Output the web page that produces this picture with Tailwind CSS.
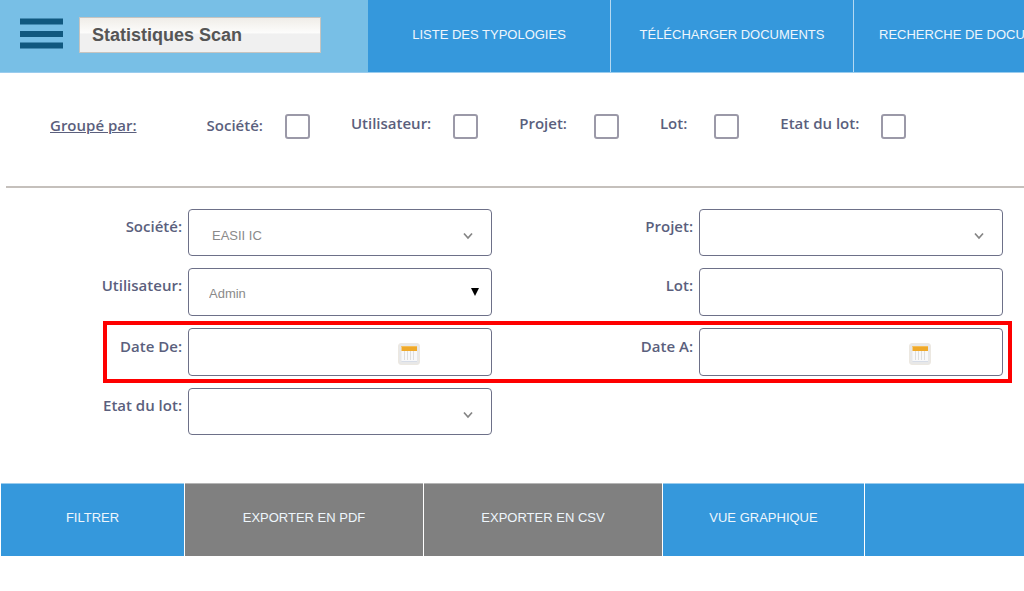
<!DOCTYPE html>
<html lang="fr">
<head>
<meta charset="utf-8">
<meta name="viewport" content="width=device-width, initial-scale=1">
<title>Statistiques Scan</title>
<script src="https://cdn.jsdelivr.net/npm/@tailwindcss/browser@4"></script>
</head>
<body class="min-h-screen overflow-x-hidden bg-white font-['Open_Sans',sans-serif] text-[15px] leading-5 font-semibold text-[#5b5f7d]">
<svg class="hidden" aria-hidden="true">
  <symbol id="chevron" viewBox="0 0 10 8"><path d="M1 1.500 5 6 9 1.500" fill="none" stroke="#858585" stroke-width="1.7"/></symbol>
  <symbol id="calendar" viewBox="0 0 22 22">
    <rect x=".5" y=".5" width="21" height="21" rx="2.5" fill="#e8e8e8" stroke="#ece8e1"/>
    <rect x="3.500" y="3.500" width="15.500" height="14.500" fill="#f8f8f9"/>
    <path d="M3.500 18H19v1H3.500z" fill="#d6dce7"/>
    <path d="M6.500 8v9M9.500 8v9M12.500 8v9M15.500 8v9" stroke="#dedede"/>
    <rect x="3.500" y="3" width="15.500" height="5" fill="#efa92a"/>
    <path d="M3.500 3.500H19" stroke="#f5bd57"/>
  </symbol>
</svg>

<header class="flex h-[73px] overflow-hidden border-b border-[#9accee] bg-[#3598dc] font-['Liberation_Sans',Arial,sans-serif]">
  <div class="flex w-[368px] shrink-0 items-start gap-4 bg-[#78bfe6] pl-5">
    <button type="button" aria-label="Menu" class="mt-[18px] text-[#10587f]">
      <svg class="h-[31px] w-[43px]" viewBox="0 0 43 31" fill="currentColor"><path d="M0 .5h43v6H0zM0 13h43v6H0zM0 24.500h43v6H0z"/></svg>
    </button>
    <input type="text" aria-label="Titre" value="Statistiques Scan" readonly class="mt-[17px] h-9 w-[242px] border border-[#c6c4c0] bg-linear-to-b from-[#f0ede8] from-0% via-[#fdfdfc] via-45% to-[#f0f0f0] to-46% px-3 text-lg font-bold text-[#555] outline-none">
  </div>
  <nav class="flex min-w-0 flex-1 text-[13px] font-normal text-[#eef6fc]">
    <a href="#" class="flex w-[243px] shrink-0 items-center justify-center border-r border-[#b5d9f2] pb-0.5">LISTE DES TYPOLOGIES</a>
    <a href="#" class="flex w-[243px] shrink-0 items-center justify-center border-r border-[#b5d9f2] pb-0.5">TÉLÉCHARGER DOCUMENTS</a>
    <a href="#" class="flex shrink-0 items-center px-[25px] pb-0.5 whitespace-nowrap">RECHERCHE DE DOCUMENTS</a>
  </nav>
</header>

<main>
  <fieldset class="ml-1.5 flex h-[115px] items-center border-b-2 border-[#c5c0bc] pb-1.5 pl-11">
    <span class="mr-[70px] pb-1 underline">Groupé par:</span>
    <div class="flex items-center gap-[41px]">
      <label class="flex items-center gap-[22px]"><span class="pb-1">Société:</span><input type="checkbox" class="size-[25px] appearance-none rounded-[3px] border-2 border-[#9b99a8] bg-white checked:bg-[#3598dc]"></label>
      <label class="flex items-center gap-[22px]"><span class="pb-2">Utilisateur:</span><input type="checkbox" class="size-[25px] appearance-none rounded-[3px] border-2 border-[#9b99a8] bg-white checked:bg-[#3598dc]"></label>
      <label class="flex items-center gap-[27px]"><span class="pb-2">Projet:</span><input type="checkbox" class="size-[25px] appearance-none rounded-[3px] border-2 border-[#9b99a8] bg-white checked:bg-[#3598dc]"></label>
      <label class="flex items-center gap-[27px]"><span class="pb-2">Lot:</span><input type="checkbox" class="size-[25px] appearance-none rounded-[3px] border-2 border-[#9b99a8] bg-white checked:bg-[#3598dc]"></label>
      <label class="flex items-center gap-[22px]"><span class="pb-2">Etat du lot:</span><input type="checkbox" class="size-[25px] appearance-none rounded-[3px] border-2 border-[#9b99a8] bg-white checked:bg-[#3598dc]"></label>
    </div>
  </fieldset>

  <form class="flex flex-col gap-3 pt-[21px] pr-0.5 pb-12">
    <div class="grid grid-cols-2">
      <div class="flex gap-1.5 pr-[19px]">
        <label for="societe" class="w-[182px] shrink-0 pt-[7px] text-right">Société:</label>
        <div class="relative flex-1">
          <select id="societe" class="block h-[47px] w-full appearance-none rounded-[4px] border border-[#6d7088] bg-white pt-1.5 pl-[23px] font-['Liberation_Sans',Arial,sans-serif] text-[13px] font-normal text-[#8a8a8a]"><option>EASII IC</option></select>
          <svg class="pointer-events-none absolute top-[23px] right-[19px] h-2 w-2.5"><use href="#chevron"/></svg>
        </div>
      </div>
      <div class="flex gap-1.5 pr-[19px]">
        <label for="projet" class="w-[182px] shrink-0 pt-[7px] text-right">Projet:</label>
        <div class="relative flex-1">
          <select id="projet" class="block h-[47px] w-full appearance-none rounded-[4px] border border-[#6d7088] bg-white pt-1.5 pl-[23px] font-['Liberation_Sans',Arial,sans-serif] text-[13px] font-normal text-[#8a8a8a]"><option></option></select>
          <svg class="pointer-events-none absolute top-[23px] right-[19px] h-2 w-2.5"><use href="#chevron"/></svg>
        </div>
      </div>
    </div>

    <div class="grid grid-cols-2">
      <div class="flex gap-1.5 pr-[19px]">
        <label for="utilisateur" class="w-[182px] shrink-0 pt-[7px] text-right">Utilisateur:</label>
        <div class="relative flex-1">
          <select id="utilisateur" class="block h-12 w-full appearance-none rounded-[4px] border border-[#6d7088] bg-white pt-1 pl-5 font-['Liberation_Sans',Arial,sans-serif] text-[13px] font-normal text-[#8a8a8a]"><option>Admin</option></select>
          <svg class="pointer-events-none absolute top-5 right-[13px] h-2 w-2" viewBox="0 0 8 8"><path d="M0 0h8L4 8z"/></svg>
        </div>
      </div>
      <div class="flex gap-1.5 pr-[19px]">
        <label for="lot" class="w-[182px] shrink-0 pt-[7px] text-right">Lot:</label>
        <input id="lot" type="text" class="h-12 min-w-0 flex-1 rounded-[4px] border border-[#6d7088] px-5 font-normal">
      </div>
    </div>

    <div class="relative grid grid-cols-2">
      <div class="flex gap-1.5 pr-[19px]">
        <label for="date-de" class="w-[182px] shrink-0 pt-2 text-right">Date De:</label>
        <div class="relative flex-1">
          <input id="date-de" type="text" class="block h-12 w-full rounded-[4px] border border-[#6d7088] px-5 font-normal">
          <button type="button" aria-label="Choisir la date de début" class="absolute top-[15px] right-[72px]"><svg class="size-[22px]"><use href="#calendar"/></svg></button>
        </div>
      </div>
      <div class="flex gap-1.5 pr-[19px]">
        <label for="date-a" class="w-[182px] shrink-0 pt-2 text-right">Date A:</label>
        <div class="relative flex-1">
          <input id="date-a" type="text" class="block h-12 w-full rounded-[4px] border border-[#6d7088] px-5 font-normal">
          <button type="button" aria-label="Choisir la date de fin" class="absolute top-[15px] right-[72px]"><svg class="size-[22px]"><use href="#calendar"/></svg></button>
        </div>
      </div>
      <div class="pointer-events-none absolute -top-[7px] right-2.5 -bottom-[7px] left-[103px] border-4 border-[#fe0000]"></div>
    </div>

    <div class="grid grid-cols-2">
      <div class="flex gap-1.5 pr-[19px]">
        <label for="etat" class="w-[182px] shrink-0 pt-[7px] text-right">Etat du lot:</label>
        <div class="relative flex-1">
          <select id="etat" class="block h-[47px] w-full appearance-none rounded-[4px] border border-[#6d7088] bg-white pt-1.5 pl-[23px] font-['Liberation_Sans',Arial,sans-serif] text-[13px] font-normal text-[#8a8a8a]"><option></option></select>
          <svg class="pointer-events-none absolute top-[23px] right-[19px] h-2 w-2.5"><use href="#chevron"/></svg>
        </div>
      </div>
    </div>
  </form>

  <div class="flex h-[73px] gap-px pl-px font-['Liberation_Sans',Arial,sans-serif] text-[13px] font-normal text-[#eef6fc]">
    <button type="button" class="w-[183px] border-t border-[#9accee] bg-[#3598dc] pb-1">FILTRER</button>
    <button type="button" class="w-[238px] border-t border-[#b5b5b5] bg-[#808080] pb-1">EXPORTER EN PDF</button>
    <button type="button" class="w-[238px] border-t border-[#b5b5b5] bg-[#808080] pb-1">EXPORTER EN CSV</button>
    <button type="button" class="w-[201px] border-t border-[#9accee] bg-[#3598dc] pb-1">VUE GRAPHIQUE</button>
    <div class="flex-1 border-t border-[#9accee] bg-[#3598dc]"></div>
  </div>
</main>
</body>
</html>
